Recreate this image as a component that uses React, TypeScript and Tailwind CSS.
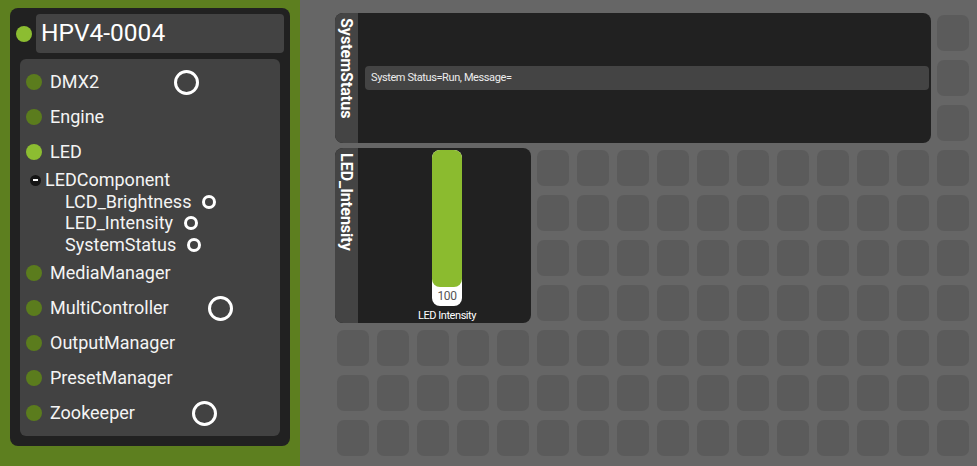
import React from "react";

const font = "font-['Roboto','Liberation_Sans',sans-serif]";

type Item = { name: string; bright?: boolean; ring?: number };

const topItems: Item[] = [
  { name: "DMX2", ring: 75 },
  { name: "Engine" },
  { name: "LED", bright: true },
];
const subItems = ["LCD_Brightness", "LED_Intensity", "SystemStatus"];
const bottomItems: Item[] = [
  { name: "MediaManager" },
  { name: "MultiController", ring: 39 },
  { name: "OutputManager" },
  { name: "PresetManager" },
  { name: "Zookeeper", ring: 57 },
];

function Row({ item }: { item: Item }) {
  return (
    <div className="h-[35px] flex items-center pl-[6px]">
      <div
        className={
          "w-[16px] h-[16px] rounded-full shrink-0 " +
          (item.bright ? "bg-[#8cbd31]" : "bg-[#5b7c1d]")
        }
      />
      <span className="ml-[8px] text-[18px] leading-none text-[#f4f4f4]">{item.name}</span>
      {item.ring !== undefined && (
        <div
          className="w-[25px] h-[25px] rounded-full border-[3px] border-white shrink-0"
          style={{ marginLeft: item.ring }}
        />
      )}
    </div>
  );
}

function Ring() {
  return <div className="w-[14px] h-[14px] rounded-full border-[3px] border-white ml-[11px] shrink-0" />;
}

function Widget({
  title,
  className,
  children,
}: {
  title: string;
  className: string;
  children: React.ReactNode;
}) {
  return (
    <div className={"flex rounded-[8px] overflow-hidden bg-[#212121] -m-[2px] " + className}>
      <div className="w-[23px] shrink-0 bg-[#444444] pt-[5px] flex justify-center">
        <span className="[writing-mode:vertical-rl] text-[16px] font-bold leading-[23px] text-white">
          {title}
        </span>
      </div>
      {children}
    </div>
  );
}

export default function App() {
  const cells = Array.from({ length: 95 });
  return (
    <div className={"flex w-[977px] h-[466px] overflow-hidden " + font}>
      {/* Left panel */}
      <div className="w-[300px] shrink-0 h-full bg-[#5d7f1f] pt-[8px] px-[10px]">
        <div className="h-[438px] bg-[#212121] rounded-[8px] p-[6px] flex flex-col">
          <div className="flex items-center gap-[4px] h-[39px] shrink-0">
            <div className="w-[16px] h-[16px] rounded-full bg-[#8cbd31] shrink-0" />
            <div className="flex-1 h-[39px] bg-[#434343] rounded-[4px] flex items-center pl-[5px] text-[24.5px] text-white">
              HPV4-0004
            </div>
          </div>
          <div className="mt-[6px] mx-[4px] mb-[4px] flex-1 bg-[#424242] rounded-[6px] py-[5.5px]">
            {topItems.map((it) => (
              <Row key={it.name} item={it} />
            ))}
            <div className="h-[21.5px] flex items-center pl-[10px]">
              <div className="w-[11px] h-[11px] rounded-full bg-[#151515] flex items-center justify-center shrink-0">
                <div className="w-[5px] h-[2px] bg-white" />
              </div>
              <span className="ml-[4px] text-[18px] leading-none text-[#f4f4f4]">LEDComponent</span>
            </div>
            {subItems.map((s) => (
              <div key={s} className="h-[21.5px] flex items-center pl-[45px]">
                <span className="text-[18px] leading-none text-[#f4f4f4]">{s}</span>
                <Ring />
              </div>
            ))}
            {bottomItems.map((it) => (
              <Row key={it.name} item={it} />
            ))}
          </div>
        </div>
      </div>

      {/* Canvas */}
      <div className="flex-1 h-full bg-[#666666] pl-[37px] pt-[15px] overflow-hidden">
        <div className="grid grid-cols-[repeat(16,32px)] grid-rows-[repeat(10,36px)] gap-x-[8px] gap-y-[9px]">
          <Widget title="SystemStatus" className="col-start-1 col-span-15 row-start-1 row-span-3">
            <div className="flex-1 flex items-center pl-[7px] pr-[2px]">
              <div className="w-full h-[24px] bg-[#444444] rounded-[4px] flex items-center pl-[6px] text-[11px] tracking-[-0.4px] text-[#ececec]">
                System Status=Run, Message=
              </div>
            </div>
          </Widget>
          <Widget title="LED_Intensity" className="col-start-1 col-span-5 row-start-4 row-span-4">
            <div className="flex-1 flex flex-col items-center pt-[2px] pl-[5px]">
              <div className="w-[30px] h-[156px] bg-white rounded-[8px] flex flex-col">
                <div className="h-[137px] bg-[#8bbb2f] rounded-[8px] shrink-0" />
                <div className="flex-1 flex items-center justify-center pb-[1px] text-[12px] tracking-[-0.4px] leading-none text-[#555555]">
                  100
                </div>
              </div>
              <div className="mt-[3px] text-[11px] tracking-[-0.45px] leading-[14px] text-white">LED Intensity</div>
            </div>
          </Widget>
          {cells.map((_, i) => (
            <div key={i} className="rounded-[7px] bg-[#5b5b5b]" />
          ))}
        </div>
      </div>
    </div>
  );
}
